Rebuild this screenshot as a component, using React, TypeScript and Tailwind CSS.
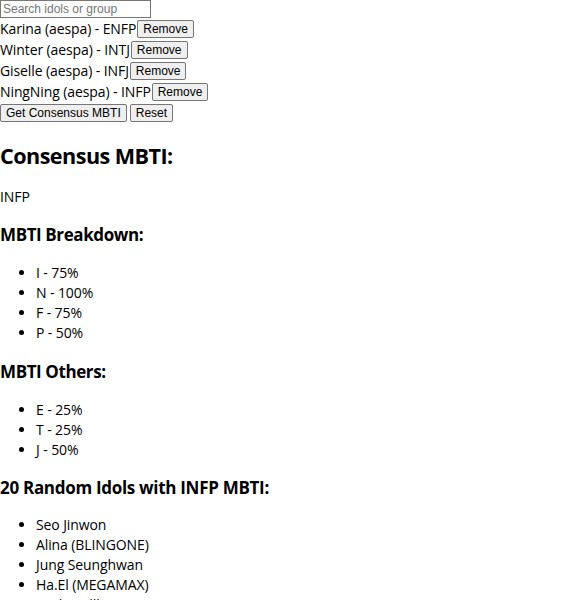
import { useState } from "react";

interface Idol {
  name: string;
  group: string;
  mbti: string;
}

const selected: Idol[] = [
  { name: "Karina", group: "aespa", mbti: "ENFP" },
  { name: "Winter", group: "aespa", mbti: "INTJ" },
  { name: "Giselle", group: "aespa", mbti: "INFJ" },
  { name: "NingNing", group: "aespa", mbti: "INFP" },
];

const breakdown = ["I - 75%", "N - 100%", "F - 75%", "P - 50%"];
const others = ["E - 25%", "T - 25%", "J - 50%"];
const randomIdols = [
  "Seo Jinwon",
  "Alina (BLINGONE)",
  "Jung Seunghwan",
  "Ha.El (MEGAMAX)",
  "Tsuki (Billlie)",
];

const btn =
  "h-[18px] shrink-0 rounded-[2px] border border-[#767676] bg-[#efefef] px-[5px] font-['Liberation_Sans',Arial,sans-serif] text-[12px] leading-[16px] text-black";

export default function App() {
  const [query, setQuery] = useState("");

  return (
    <div className="font-['Open_Sans',sans-serif] text-[14px] leading-[20px] tracking-[-0.1px] text-black">
      <input
        type="text"
        value={query}
        onChange={(e) => setQuery(e.target.value)}
        placeholder="Search idols or group"
        className="block h-[18px] w-[151px] border border-[#767676] bg-white px-[2px] font-['Liberation_Sans',Arial,sans-serif] text-[12px] tracking-normal placeholder:text-[#757575] focus:outline-none"
      />

      {selected.map((idol) => (
        <div key={idol.name} className="flex h-[21px] items-center leading-[21px]">
          <span>
            {idol.name} ({idol.group}) - {idol.mbti}
          </span>
          <button type="button" className={`${btn} ml-px tracking-normal`}>
            Remove
          </button>
        </div>
      ))}

      <div className="flex h-[21px] items-center gap-[3px] tracking-normal">
        <button type="button" className={btn}>
          Get Consensus MBTI
        </button>
        <button type="button" className={btn}>
          Reset
        </button>
      </div>

      <h2 className="mt-[18px] text-[21.6px] font-bold leading-[29px] tracking-[-0.55px]">
        Consensus MBTI:
      </h2>
      <p className="mt-[17px]">INFP</p>

      <h3 className="mt-[16px] text-[17px] font-bold leading-[23px] tracking-[-0.4px]">
        MBTI Breakdown:
      </h3>
      <ul className="mt-[17px] list-disc pl-[36px]">
        {breakdown.map((item) => (
          <li key={item}>{item}</li>
        ))}
      </ul>

      <h3 className="mt-[17px] text-[17px] font-bold leading-[23px] tracking-[-0.4px]">
        MBTI Others:
      </h3>
      <ul className="mt-[17px] list-disc pl-[36px]">
        {others.map((item) => (
          <li key={item}>{item}</li>
        ))}
      </ul>

      <h3 className="mt-[16px] text-[17px] font-bold leading-[23px] tracking-[-0.3px]">
        20 Random Idols with INFP MBTI:
      </h3>
      <ul className="mt-[16px] list-disc pl-[36px]">
        {randomIdols.map((item) => (
          <li key={item}>{item}</li>
        ))}
      </ul>
    </div>
  );
}
